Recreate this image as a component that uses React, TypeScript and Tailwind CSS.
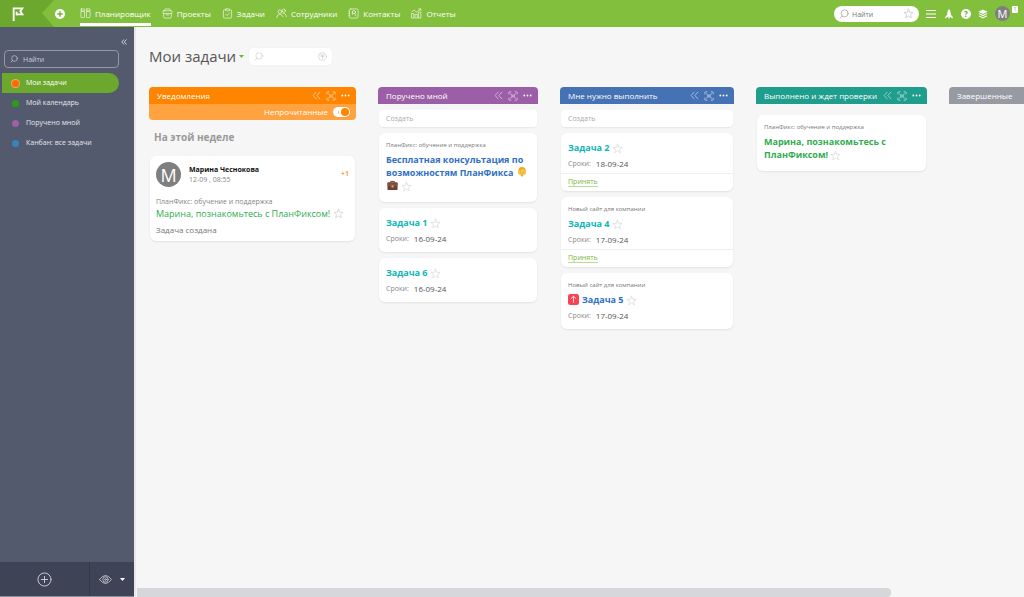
import type { ReactNode } from "react";

type IconProps = { className?: string };

const stroke = {
  fill: "none",
  stroke: "currentColor",
  strokeWidth: 1.6,
  strokeLinecap: "round" as const,
  strokeLinejoin: "round" as const,
};

function Svg({ className = "size-3", children }: IconProps & { children: ReactNode }) {
  return (
    <svg viewBox="0 0 24 24" className={`shrink-0 ${className}`} aria-hidden="true" {...stroke}>
      {children}
    </svg>
  );
}

const Search = ({ className }: IconProps) => (
  <Svg className={className}>
    <circle cx="13.5" cy="10.5" r="8.5" />
    <path d="M7.5 16.5 2.5 21.5" />
  </Svg>
);

const Star = ({ className = "size-3 text-[#d8d8d8]" }: IconProps) => (
  <Svg className={className}>
    <path d="M12 2.5 14.7 9.2 22 9.7 16.4 14.3 18.2 21.4 12 17.5 5.8 21.4 7.6 14.3 2 9.7 9.3 9.2Z" />
  </Svg>
);

const Boards = () => (
  <Svg className="size-[11px] opacity-85">
    <rect x="2" y="2" width="8" height="5" rx="1" />
    <rect x="2" y="7" width="8" height="14" rx="1.5" />
    <rect x="14" y="2" width="8" height="5" rx="1" />
    <rect x="14" y="7" width="8" height="14" rx="1.5" />
  </Svg>
);

const Briefcase = () => (
  <Svg className="size-[11px] opacity-85">
    <path d="M6 6V4Q6 2 8 2H16Q18 2 18 4V6" />
    <rect x="2" y="6" width="20" height="6" rx="2" />
    <path d="M3.5 12V19Q3.5 22 6.5 22H17.5Q20.5 22 20.5 19V12M9 15H15" />
  </Svg>
);

const TaskCheck = () => (
  <Svg className="size-[11px] opacity-85">
    <path d="M7.5 4H5.5Q3 4 3 6.5V19.5Q3 22 5.5 22H18.5Q21 22 21 19.5V6.5Q21 4 18.5 4H16.5" />
    <rect x="7.5" y="2" width="9" height="4" rx="1.5" />
    <path d="M8 13.5 11 16.5 16.5 10.5" />
  </Svg>
);

const People = () => (
  <Svg className="size-[11px] opacity-85">
    <circle cx="8.5" cy="8" r="4" />
    <path d="M1.5 21Q2 13.5 8.5 13.5Q13 13.5 15 19" />
    <circle cx="17" cy="6" r="3.5" />
    <path d="M15.5 11.5Q22 11 22.5 19" />
  </Svg>
);

const ContactBook = () => (
  <Svg className="size-[11px] opacity-85">
    <rect x="3" y="2" width="19" height="20" rx="3" />
    <path d="M1.5 7H3M1.5 12H3M1.5 17H3" />
    <circle cx="13" cy="9" r="3.5" />
    <path d="M14.5 12.5 17.5 17.5M9.5 9V14" />
  </Svg>
);

const Chart = () => (
  <Svg className="size-[11px] opacity-85">
    <rect x="2" y="12" width="4.5" height="10" />
    <rect x="9.5" y="14" width="4.5" height="8" />
    <rect x="17" y="9" width="4.5" height="13" />
    <path d="M2 8 7 4.5 12 9 21 2.5M17 2H21.5V6" />
  </Svg>
);

const Collapse = () => (
  <Svg className="size-[9px] opacity-85">
    <path d="M11 3 3 12 11 21M21 3 13 12 21 21" />
  </Svg>
);

const Expand = () => (
  <Svg className="size-[10px] opacity-85">
    <path d="M2 7V4Q2 2 4 2H7M17 2H20Q22 2 22 4V7M22 17V20Q22 22 20 22H17M7 22H4Q2 22 2 20V17" />
    <path d="M6 7 9.5 10V14L6 17M18 7 14.5 10V14L18 17M12 9V15" />
  </Svg>
);

const Dots = () => (
  <svg viewBox="0 0 24 24" className="size-[9px] shrink-0" fill="currentColor" aria-hidden="true">
    <circle cx="3.5" cy="12" r="2.4" />
    <circle cx="12" cy="12" r="2.4" />
    <circle cx="20.5" cy="12" r="2.4" />
  </svg>
);

const Flag = () => (
  <svg viewBox="0 0 36 42" className="h-[14px] w-3" fill="none" stroke="white" strokeWidth="5.5" aria-hidden="true">
    <path d="M5 42V4H31L25 13 31 22H15" />
    <path d="M14 14V25" />
  </svg>
);

const PlusDisc = () => (
  <svg viewBox="0 0 24 24" className="size-[10px]" aria-hidden="true">
    <circle cx="12" cy="12" r="12" fill="white" />
    <path d="M12 5.5V18.5M5.5 12H18.5" stroke="#74b330" strokeWidth="3.5" />
  </svg>
);

const Rocket = () => (
  <svg viewBox="0 0 24 24" className="size-[10px]" fill="currentColor" aria-hidden="true">
    <path d="M12 0Q16 4 16 9V13L21 19V23L15.5 19H13.5V23H10.5V19H8.5L3 23V19L8 13V9Q8 4 12 0Z" />
  </svg>
);

const Layers = () => (
  <svg viewBox="0 0 24 24" className="size-[10px]" fill="currentColor" aria-hidden="true">
    <path d="M12 1 23 6.5 12 12 1 6.5Z" />
    <path d="M3.5 10 12 14.2 20.5 10 23 11.5 12 17.2 1 11.5Z" />
    <path d="M3.5 15.5 12 19.7 20.5 15.5 23 17 12 23 1 17Z" />
  </svg>
);

const Person = () => (
  <svg viewBox="0 0 24 24" className="ml-[1px] inline-block size-[10px] align-[-1px]" role="img" aria-label="Человек">
    <path d="M3 10Q3 0 12 0Q21 0 21 10V15Q20 19 17 18L12 24 7 18Q4 19 3 15Z" fill="#f0a820" />
    <ellipse cx="12" cy="12" rx="7" ry="8" fill="#ffce45" />
    <path d="M5 9Q12 9 15 4Q17 8 19 9Q18 2 12 2Q6 2 5 9Z" fill="#f3ad22" />
    <circle cx="9" cy="12" r="1" fill="#5d4324" />
    <circle cx="15" cy="12" r="1" fill="#5d4324" />
    <path d="M9 16Q12 18 15 16" stroke="#a86520" fill="none" />
  </svg>
);

const BrownCase = () => (
  <svg viewBox="0 0 24 24" className="mx-[1px] inline-block size-[11px] align-[-2px]" role="img" aria-label="Портфель">
    <path d="M8 6V3H16V6" fill="none" stroke="#4a3434" strokeWidth="2" />
    <rect x="1" y="5" width="22" height="17" rx="2" fill="#6b4035" />
    <path d="M1 7V12L12 15 23 12V7Z" fill="#87513f" />
    <rect x="10" y="11.5" width="4" height="5" fill="#e3ab55" />
  </svg>
);

const UpArrow = () => (
  <svg viewBox="0 0 24 24" className="mr-[3px] inline-block size-[11px] align-[-2px]" role="img" aria-label="Важная">
    <rect width="24" height="24" rx="5" fill="#fa4252" />
    <path d="M12 19V5M6.5 10 12 5 17.5 10" fill="none" stroke="white" strokeWidth="1.8" />
  </svg>
);

const Caret = ({ className }: IconProps) => (
  <svg viewBox="0 0 10 6" className={`h-[3px] w-[5px] ${className}`} fill="currentColor" aria-hidden="true">
    <path d="M0 0H10L5 6Z" />
  </svg>
);

const nav = [
  { label: "Планировщик", icon: <Boards />, active: true },
  { label: "Проекты", icon: <Briefcase /> },
  { label: "Задачи", icon: <TaskCheck /> },
  { label: "Сотрудники", icon: <People /> },
  { label: "Контакты", icon: <ContactBook /> },
  { label: "Отчеты", icon: <Chart /> },
];

function TopBar() {
  return (
    <header className="flex h-[27px] shrink-0 items-center bg-[#82bf3c] text-white">
      <div className="relative flex h-full w-[54px] shrink-0 items-center bg-[#6ca82d] pl-3">
        <Flag />
        <svg viewBox="0 0 12 27" className="absolute right-0 top-0 h-full w-3" preserveAspectRatio="none" aria-hidden="true">
          <path d="M12 0 0 13 12 27Z" fill="#82bf3c" />
        </svg>
      </div>
      <button type="button" aria-label="Добавить" className="ml-[1px]">
        <PlusDisc />
      </button>
      <nav className="ml-[15px] flex h-full gap-[11px]">
        {nav.map((item) => (
          <a
            key={item.label}
            href="#"
            className={`flex h-[26px] items-center gap-1 border-b-[3px] pt-1 text-[8px] font-medium leading-3 ${
              item.active ? "border-white" : "border-transparent"
            }`}
          >
            {item.icon}
            <span>{item.label}</span>
          </a>
        ))}
      </nav>
      <label className="ml-auto flex h-4 w-[85px] items-center gap-[3px] rounded-full bg-white px-[5px] text-[#999]">
        <Search className="size-[10px]" />
        <input aria-label="Найти" placeholder="Найти" className="h-full w-0 min-w-0 flex-1 pt-[1px] text-[7px] outline-none placeholder:text-[#777]" />
        <Star className="size-[11px] text-[#c4c4c4]" />
      </label>
      <div className="ml-[6px] flex items-center gap-[7px] pr-[6px]">
        <button type="button" aria-label="Меню">
          <svg viewBox="0 0 12 12" className="size-3" stroke="currentColor" aria-hidden="true">
            <path d="M1 2.5H11M1 6H11M1 9.5H11" />
          </svg>
        </button>
        <button type="button" aria-label="Новости"><Rocket /></button>
        <button type="button" aria-label="Помощь" className="flex size-[10px] items-center justify-center rounded-full bg-white text-[8px] font-bold leading-none text-[#6ca82d]">?</button>
        <button type="button" aria-label="Слои"><Layers /></button>
        <div className="flex items-start">
          <span className="flex size-[15px] items-center justify-center rounded-full bg-[#7f7f7f] text-[11px] leading-none">М</span>
          <span className="ml-[2px] flex h-[7px] w-[6px] items-center justify-center rounded-[1px] bg-white text-[5px] leading-none text-[#888]">1</span>
        </div>
      </div>
    </header>
  );
}

const views = [
  { label: "Мои задачи", dot: "bg-[#ff6a00] ring-1 ring-[#f0a868]", active: true },
  { label: "Мой календарь", dot: "bg-[#27a011]" },
  { label: "Поручено мной", dot: "bg-[#9c5fa8]" },
  { label: "Канбан: все задачи", dot: "bg-[#3584bd]" },
];

function Sidebar() {
  return (
    <aside className="flex w-[134px] shrink-0 flex-col bg-[#545a6d] text-[#e4e6ea]">
      <button type="button" aria-label="Свернуть панель" className="mr-[7px] mt-[11px] h-2 self-end">
        <svg viewBox="0 0 24 24" className="size-[6px]" fill="none" stroke="#ccd0d8" strokeWidth="4" aria-hidden="true">
          <path d="M12 2 3 12 12 22M22 2 13 12 22 22" />
        </svg>
      </button>
      <label className="ml-1 mr-[15px] mt-1 flex h-[18px] items-center gap-[5px] rounded-[4px] border border-[#9498a5] px-[5px]">
        <Search className="size-2" />
        <input aria-label="Найти вид" placeholder="Найти" className="h-full w-0 min-w-0 flex-1 pt-[1px] text-[7px] outline-none placeholder:text-[#c9ccd4]" />
      </label>
      <ul className="ml-[2px] mr-[15px] mt-[5px] text-[7px] font-medium">
        {views.map((view) => (
          <li key={view.label}>
            <a
              href="#"
              className={`flex h-5 items-center gap-[7px] rounded-r-full pl-[10px] ${view.active ? "bg-[#6ca82d] text-white" : ""}`}
            >
              <span className={`size-[7px] shrink-0 rounded-full ${view.dot}`} />
              {view.label}
            </a>
          </li>
        ))}
      </ul>
      <div className="mt-auto flex h-[35px] border-b border-[#8d909b] bg-[#3f4356] text-[#c6c8d0]">
        <button type="button" aria-label="Новый вид" className="flex w-[90px] items-center justify-center border-r border-[#343849]">
          <Svg className="size-[15px]">
            <circle cx="12" cy="12" r="10.5" />
            <path d="M12 7V17M7 12H17" />
          </Svg>
        </button>
        <button type="button" aria-label="Видимость" className="flex flex-1 items-center justify-center gap-2">
          <Svg className="size-[13px]">
            <path d="M1 12Q12 -3 23 12Q12 27 1 12Z" />
            <circle cx="12" cy="12" r="5" />
            <circle cx="12" cy="12" r="1.5" />
          </Svg>
          <Caret className="text-white" />
        </button>
      </div>
    </aside>
  );
}

function ColumnHeader({ title, color, actions = true }: { title: string; color: string; actions?: boolean }) {
  return (
    <header className={`flex h-[17px] items-center justify-between rounded-t-[4px] px-2 text-white ${color}`}>
      <h2 className="whitespace-nowrap text-[8px] font-medium">{title}</h2>
      {actions && (
        <div className="-mr-[2px] flex items-center gap-[5px]">
          <button type="button" aria-label="Свернуть"><Collapse /></button>
          <button type="button" aria-label="Развернуть"><Expand /></button>
          <button type="button" aria-label="Ещё"><Dots /></button>
        </div>
      )}
    </header>
  );
}

function CreateTask({ label }: { label: string }) {
  return (
    <input
      aria-label={label}
      placeholder="Создать"
      className="mx-[1px] h-[17px] rounded-[4px] bg-white px-[7px] text-[7px] shadow-[0_1px_1px_#e8e8e8] outline-none placeholder:text-[#aaa]"
    />
  );
}

type TaskProps = {
  title: ReactNode;
  color: string;
  project?: string;
  due?: string;
  accept?: boolean;
};

function Task({ title, color, project, due, accept }: TaskProps) {
  return (
    <article className="mx-[1px] rounded-[6px] bg-white shadow-[0_1px_2px_#e2e2e2]">
      <div className={`px-[7px] ${project ? "pt-[7px]" : "pt-2"} ${accept ? "pb-1" : due ? "pb-2" : "pb-[10px]"}`}>
        {project && <p className="mb-[3px] text-[6px] leading-[10px] text-[#777]">{project}</p>}
        <h3 className={`text-[9px] font-bold leading-[13px] ${color}`}>
          {title} <Star className="inline-block size-[11px] align-[-3px] text-[#d8d8d8]" />
        </h3>
        {due && (
          <p className="mt-[5px] flex gap-[5px] text-[7px] leading-[10px] text-[#555]">
            <span className="text-[#888]">Сроки:</span>
            <time className="text-[8px]">{due}</time>
          </p>
        )}
      </div>
      {accept && (
        <footer className="flex h-[18px] items-center border-t border-[#eee] px-[7px]">
          <button type="button" className="border-b border-[#b9dc93] text-[7px] leading-2 text-[#79b735]">Принять</button>
        </footer>
      )}
    </article>
  );
}

function Notifications() {
  return (
    <section className="w-[207px] shrink-0">
      <ColumnHeader title="Уведомления" color="bg-[#ff8500]" />
      <label className="flex h-4 items-center justify-end gap-[5px] rounded-b-[4px] bg-[#ffa340] pr-[6px] text-[8px] font-medium text-white">
        Непрочитанные
        <input type="checkbox" defaultChecked className="peer sr-only" />
        <span className="flex h-[10px] w-[17px] items-center justify-end rounded-full bg-white p-[1px]">
          <span className="mr-[2px] h-[3px] w-[1px] bg-[#ffc58a]" />
          <span className="size-2 rounded-full bg-[#ff8500]" />
        </span>
      </label>
      <h3 className="mb-[11px] ml-[5px] mt-[9px] text-[10px] font-bold leading-4 text-[#9a9a9a]">На этой неделе</h3>
      <article className="mx-[1px] rounded-[6px] bg-white px-[6px] pb-[6px] pt-[6px] shadow-[0_1px_2px_#e2e2e2]">
        <div className="flex items-center">
          <span className="flex size-[25px] items-center justify-center rounded-full bg-[#7f7f7f] text-[18px] leading-none text-white">М</span>
          <div className="ml-2">
            <p className="text-[7px] font-bold leading-[11px] text-[#111]">Марина Чеснокова</p>
            <p className="text-[7px] leading-[10px] text-[#888]">12-09 , 08:55</p>
          </div>
          <span className="ml-auto text-[7px] font-semibold text-[#f58a1f]">+1</span>
        </div>
        <p className="mt-[10px] text-[7px] leading-[10px] text-[#858585]">ПланФикс: обучение и поддержка</p>
        <p className="text-[9px] leading-[14px] text-[#31ac51]">
          Марина, познакомьтесь с ПланФиксом! <Star className="inline-block size-[11px] align-[-2px] text-[#d0d0d0]" />
        </p>
        <p className="mt-1 text-[8px] leading-[10px] text-[#777]">Задача создана</p>
      </article>
    </section>
  );
}

const teal = "text-[#0eb5b5]";
const blue = "text-[#2f70c3]";

function Board() {
  return (
    <div className="flex min-h-0 flex-1 items-start gap-[22px] overflow-hidden pl-[13px] pt-[1px]">
      <Notifications />
      <section className="flex w-[160px] shrink-0 flex-col gap-[6px]">
        <ColumnHeader title="Поручено мной" color="bg-[#9c5ea6]" />
        <CreateTask label="Создать в «Поручено мной»" />
        <Task
          project="ПланФикс: обучение и поддержка"
          color={blue}
          title={<>Бесплатная консультация по возможностям ПланФикса <Person /> <BrownCase /></>}
        />
        <Task title="Задача 1" color={teal} due="16-09-24" />
        <Task title="Задача 6" color={teal} due="16-09-24" />
      </section>
      <section className="flex w-[174px] shrink-0 flex-col gap-[6px]">
        <ColumnHeader title="Мне нужно выполнить" color="bg-[#4472b4]" />
        <CreateTask label="Создать в «Мне нужно выполнить»" />
        <Task title="Задача 2" color={teal} due="18-09-24" accept />
        <Task project="Новый сайт для компании" title="Задача 4" color={teal} due="17-09-24" accept />
        <Task project="Новый сайт для компании" title={<><UpArrow />Задача 5</>} color={blue} due="17-09-24" />
      </section>
      <section className="flex w-[171px] shrink-0 flex-col gap-[11px]">
        <ColumnHeader title="Выполнено и ждет проверки" color="bg-[#1f9e8e]" />
        <Task project="ПланФикс: обучение и поддержка" title="Марина, познакомьтесь с ПланФиксом!" color="text-[#31ac51]" />
      </section>
      <section className="w-[171px] shrink-0">
        <ColumnHeader title="Завершенные" color="bg-[#969ba3]" actions={false} />
      </section>
    </div>
  );
}

export default function App() {
  return (
    <div className="flex h-screen flex-col overflow-hidden bg-[#f6f6f6] font-['Open_Sans','Noto_Sans',sans-serif]">
      <TopBar />
      <div className="flex min-h-0 flex-1">
        <Sidebar />
        <main className="flex min-w-0 flex-1 flex-col border-l-2 border-[#e8e8e8]">
          <div className="mb-[21px] ml-[13px] mt-5 flex h-[18px] items-center">
            <h1 className="text-[15px] leading-[18px] text-[#555]">Мои задачи</h1>
            <button type="button" aria-label="Выбрать вид" className="ml-[3px] mr-[5px]">
              <Caret className="block text-[#74b330]" />
            </button>
            <label className="flex h-[17px] w-[83px] items-center rounded-[4px] bg-white px-[5px] text-[#c6c6c6] shadow-[0_0_1px_#ddd]">
              <Search className="size-[9px]" />
              <input aria-label="Поиск задач" className="w-0 min-w-0 flex-1 text-[7px] outline-none" />
              <Svg className="size-[9px]">
                <circle cx="12" cy="12" r="10.5" />
                <path d="M6 8H18M8 12H16M12 8V18" />
              </Svg>
            </label>
          </div>
          <Board />
          <div className="ml-[1px] h-[9px] shrink-0">
            <div className="h-full w-[85%] rounded-r-[4px] bg-[#d5d7db]" />
          </div>
        </main>
      </div>
    </div>
  );
}
